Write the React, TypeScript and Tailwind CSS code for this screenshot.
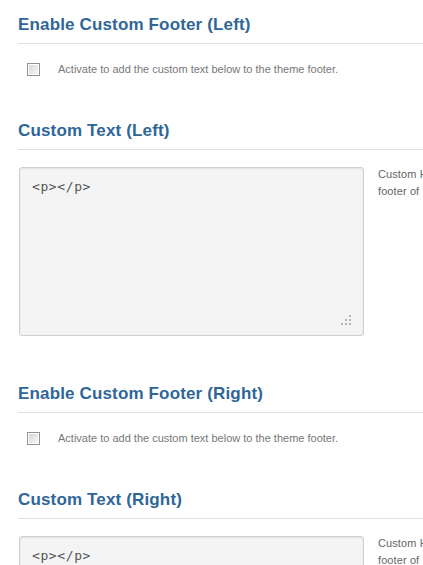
const sections = [
  { id: 'left', label: 'Left' },
  { id: 'right', label: 'Right' },
];

function Checkbox() {
  return (
    <span className="flex h-[13px] w-[13px] shrink-0 items-center justify-center border border-[#939393] bg-white">
      <span className="h-[9px] w-[9px] bg-gradient-to-br from-[#d8d8d8] to-[#f7f7f7]" />
    </span>
  );
}

function Heading({ children }: { children: React.ReactNode }) {
  return (
    <h3 className="border-b border-[#dfdfdf] pb-[8px] text-[17px] font-bold leading-[20px] tracking-[0.15px] text-[#2f6699]">
      {children}
    </h3>
  );
}

function ResizeGrip() {
  const dots = [
    [9, 0],
    [5, 4],
    [9, 4],
    [1, 8],
    [5, 8],
    [9, 8],
  ];
  return (
    <svg className="absolute bottom-[10px] right-[12px]" width="11" height="10" viewBox="0 0 11 10">
      {dots.map(([x, y], i) => (
        <rect key={i} x={x} y={y} width="2" height="2" fill="#b4b4b4" />
      ))}
    </svg>
  );
}

export default function App() {
  return (
    <div className="h-[565px] w-[423px] overflow-hidden bg-white font-['Liberation_Sans',Arial,sans-serif]">
      <div className="w-[700px] pl-[18px]">
        {sections.map((s, i) => (
          <div key={s.id} className={i === 0 ? 'pt-[15px]' : 'pt-[48px]'}>
            <Heading>Enable Custom Footer ({s.label})</Heading>
            <label className="mt-[19px] flex items-center pl-[9px]">
              <Checkbox />
              <span className="ml-[18px] text-[11px] leading-[13px] text-[#777]">
                Activate to add the custom text below to the theme footer.
              </span>
            </label>

            <div className="pt-[45px]">
              <Heading>Custom Text ({s.label})</Heading>
              <div className="mt-[17px] flex items-start pl-px">
                <div className="relative h-[169px] w-[345px] shrink-0 rounded-[3px] border border-[#cfcfcf] bg-[#f4f4f4] shadow-[inset_0_1px_2px_rgba(0,0,0,0.08)]">
                  <div className="px-[12px] pt-[10px] font-['DejaVu_Sans_Mono',monospace] text-[13px] leading-[18px] tracking-[0.6px] text-[#555]">
                    {'<p></p>'}
                  </div>
                  <ResizeGrip />
                </div>
                <p className="-mt-[1px] ml-[14px] w-[300px] text-[11px] leading-[17px] tracking-[0.1px] text-[#666]">
                  Custom HTML text to be displayed in the {s.id}
                  <br />
                  footer of&nbsp;&nbsp; the theme.
                </p>
              </div>
            </div>
          </div>
        ))}
      </div>
    </div>
  );
}
